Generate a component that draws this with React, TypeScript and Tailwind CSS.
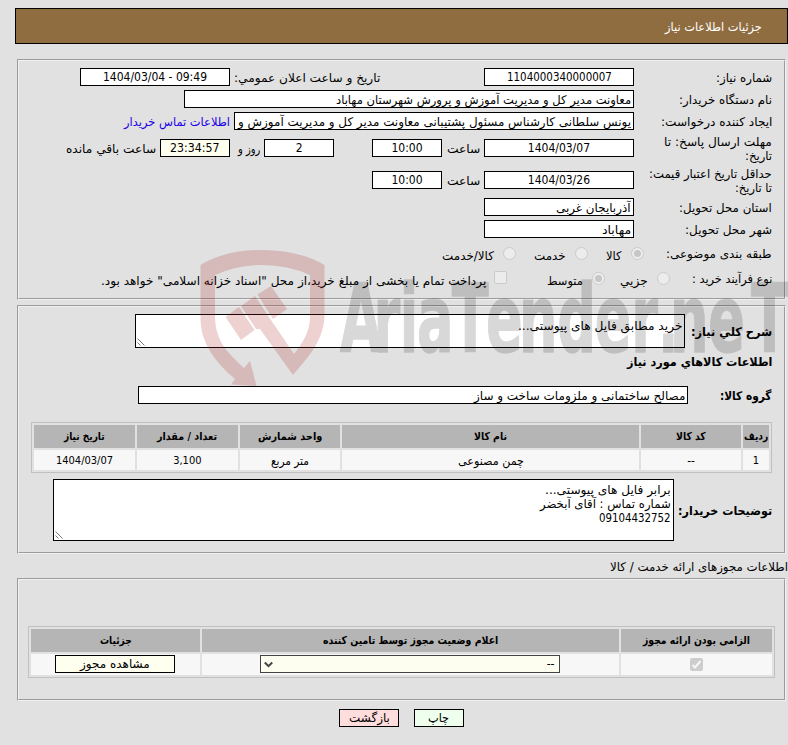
import React, { useLayoutEffect, useRef, useState } from 'react';
import clsx from 'clsx';

interface TxtProps {
  w: number;
  className?: string;
  children: React.ReactNode;
}

// Text squeezed or stretched to a fixed width, anchored on its right edge
const Txt: React.FC<TxtProps> = ({ w, className, children }) => {
  const ref = useRef<HTMLSpanElement>(null);
  const [scale, setScale] = useState(1);

  useLayoutEffect(() => {
    if (ref.current && ref.current.offsetWidth > 0) {
      setScale(w / ref.current.offsetWidth);
    }
  }, [w]);

  return (
    <span className={clsx('flex shrink-0 justify-start', className)} style={{ width: w }}>
      <span
        ref={ref}
        className="block shrink-0 origin-right whitespace-nowrap"
        style={{ transform: `scaleX(${scale})` }}
      >
        {children}
      </span>
    </span>
  );
};

interface FieldProps {
  className: string;
  w: number;
  center?: boolean;
  children: React.ReactNode;
}

const Field: React.FC<FieldProps> = ({ className, w, center, children }) => (
  <div
    className={clsx(
      'flex h-[18px] shrink-0 items-center overflow-hidden border border-black',
      center ? 'justify-center' : 'pt-[2px] pr-[2px]',
      className
    )}
  >
    <Txt w={w}>{children}</Txt>
  </div>
);

const Panel: React.FC<{ className: string; children: React.ReactNode }> = ({
  className,
  children,
}) => (
  <section
    className={clsx('mr-[2px] ml-[17px] border-2 border-[#f0f0f0] [border-style:groove]', className)}
  >
    {children}
  </section>
);

const Radio: React.FC<{ checked?: boolean; className?: string }> = ({ checked, className }) => (
  <span
    className={clsx(
      'flex size-[13px] shrink-0 items-center justify-center rounded-full border border-[#cbcbcb] bg-[#ececec]',
      className
    )}
  >
    {checked && <span className="size-[7px] rounded-full bg-[#c6c6c6]" />}
  </span>
);

const Grip = () => (
  <svg className="absolute bottom-px left-px size-[8px]" viewBox="0 0 8 8" stroke="#555" fill="none">
    <path d="M0.5 0.5L7.5 7.5M0.5 4.5L3.5 7.5" strokeWidth="0.8" />
  </svg>
);

const HeadCell: React.FC<{ w: number; className?: string; children: string }> = ({
  w,
  className,
  children,
}) => (
  <div
    className={clsx(
      'flex h-[23px] shrink-0 items-center justify-center bg-[#b5b5b5] pt-px text-[11px] font-bold',
      className
    )}
  >
    <Txt w={w}>{children}</Txt>
  </div>
);

const Cell: React.FC<{ className?: string; children: React.ReactNode }> = ({
  className,
  children,
}) => (
  <div className={clsx('flex shrink-0 items-center justify-center bg-[#f7f7f7] pt-px', className)}>
    {children}
  </div>
);

const Watermark = () => (
  <svg
    className="pointer-events-none absolute top-[240px] left-[190px] h-[160px] w-[598px]"
    viewBox="190 240 598 160"
  >
    <g fill="#aa1e1e" fillOpacity="0.2">
      <path d="M200.500 265Q225 250 262 250Q299 250 324.500 265V318C322 342 310 355 293 375L260 329L256 329L241 306L255 296L271 320L294 354C303 343 310 330 310 318V275Q288 265 262 265Q236 265 215 275V318C216 342 228 353 244 368L250 361L256.500 386L231 384.500L235 379C214 361 200.500 342 200.500 318Z" />
      <path d="M225.500 317L239 307L254.500 330L241 340Z" />
      <path d="M257.500 294.500L271 286L287 309L273 319Z" />
    </g>
    <g opacity="0.15" transform="translate(340 352) scale(0.57 1)">
      <text
        x="0 58.8 105 135 196 256 314 381 447 511 558 579 646 721"
        y="0"
        direction="ltr"
        className="font-['DejaVu_Sans'] text-[95px] font-bold"
        fill="#000"
        stroke="#000"
        strokeWidth="1.5"
        strokeLinejoin="round"
      >
        AriaTender.neT
      </text>
    </g>
  </svg>
);

const App = () => {
  return (
    <div
      dir="rtl"
      className="relative h-[745px] w-[788px] overflow-hidden bg-[#e1e1e1] pt-2 font-['DejaVu_Sans_Condensed','DejaVu_Sans',sans-serif] text-[12px] leading-[14px] text-black"
    >
      <header className="ml-[15px] flex h-9 items-center border border-black bg-[#8f6d41] pt-[2px] pr-[25px] text-white">
        <Txt w={97}>جزئیات اطلاعات نیاز</Txt>
      </header>

      <Panel className="mt-[15px] h-[241px] pt-[5px] pr-3">
        <div className="flex h-[22px] items-center">
          <div className="w-[138px] pt-[2px]">
            <Txt w={56}>شماره نیاز:</Txt>
          </div>
          <Field className="w-[150px] bg-white" w={105} center>
            1104000340000007
          </Field>
          <Txt w={146} className="mr-[104px] pt-[2px]">
            تاریخ و ساعت اعلان عمومي:
          </Txt>
          <Field className="mr-1 w-[150px] bg-white" w={104} center>
            <bdi dir="ltr">1404/03/04 - 09:49</bdi>
          </Field>
        </div>
        <div className="flex h-[22px] items-center">
          <div className="w-[138px] pt-[2px]">
            <Txt w={93}>نام دستگاه خریدار:</Txt>
          </div>
          <Field className="w-[450px] bg-white" w={295}>
            معاونت مدیر کل و مدیریت آموزش و پرورش شهرستان مهاباد
          </Field>
        </div>
        <div className="flex h-[22px] items-center">
          <div className="w-[138px] pt-[2px]">
            <Txt w={111}>ایجاد کننده درخواست:</Txt>
          </div>
          <Field className="w-[400px] bg-white" w={393}>
            یونس سلطانی کارشناس مسئول پشتیبانی معاونت مدیر کل و مدیریت آموزش و
          </Field>
          <a className="mr-1 pt-[2px] text-[#1c00e8]">
            <Txt w={106}>اطلاعات تماس خریدار</Txt>
          </a>
        </div>
        <div className="flex h-8 items-center">
          <div className="w-[138px] pt-px">
            <Txt w={108}>مهلت ارسال پاسخ: تا</Txt>
            <Txt w={27}>تاریخ:</Txt>
          </div>
          <Field className="w-[150px] bg-white" w={62} center>
            1404/03/07
          </Field>
          <Txt w={33} className="mr-1 pt-[2px]">
            ساعت
          </Txt>
          <Field className="mr-[5px] w-[70px] bg-white" w={31} center>
            10:00
          </Field>
          <Field className="mr-[38px] w-[70px] bg-white" w={7} center>
            2
          </Field>
          <Txt w={22} className="mr-1 pt-[2px]">
            روز و
          </Txt>
          <Field className="mr-2 w-[70px] bg-[#fffff0]" w={49} center>
            23:34:57
          </Field>
          <Txt w={90} className="mr-1 pt-[2px]">
            ساعت باقي مانده
          </Txt>
        </div>
        <div className="flex h-8 items-center">
          <div className="w-[138px] pt-[2px]">
            <Txt w={123}>حداقل تاریخ اعتبار قیمت:</Txt>
            <Txt w={37}>تا تاریخ:</Txt>
          </div>
          <Field className="w-[150px] bg-white" w={62} center>
            1404/03/26
          </Field>
          <Txt w={33} className="mr-1 pt-[2px]">
            ساعت
          </Txt>
          <Field className="mr-[5px] w-[70px] bg-white" w={31} center>
            10:00
          </Field>
        </div>
        <div className="flex h-[22px] items-center">
          <div className="w-[138px] pt-[2px]">
            <Txt w={93}>استان محل تحویل:</Txt>
          </div>
          <Field className="w-[150px] bg-white" w={75}>
            آذربایجان غربی
          </Field>
        </div>
        <div className="flex h-[22px] items-center">
          <div className="w-[138px] pt-[2px]">
            <Txt w={87}>شهر محل تحویل:</Txt>
          </div>
          <Field className="w-[150px] bg-white" w={29}>
            مهاباد
          </Field>
        </div>
        <div className="flex h-[27px] items-center">
          <div className="w-[128px]">
            <Txt w={106}>طبقه بندی موضوعی:</Txt>
          </div>
          <Radio checked />
          <Txt w={16} className="mt-1 mr-[9px]">
            کالا
          </Txt>
          <Radio className="mr-[18px]" />
          <Txt w={32} className="mt-1 mr-[9px]">
            خدمت
          </Txt>
          <Radio className="mr-[18px]" />
          <Txt w={52} className="mt-1 mr-[9px]">
            کالا/خدمت
          </Txt>
        </div>
        <div className="flex h-[23px] items-center">
          <div className="w-[102px]">
            <Txt w={80}>نوع فرآیند خرید :</Txt>
          </div>
          <Radio />
          <Txt w={28} className="mt-1 mr-[9px]">
            جزیي
          </Txt>
          <Radio checked className="mr-[15px]" />
          <Txt w={36} className="mt-1 mr-[9px]">
            متوسط
          </Txt>
          <span className="mr-10 mb-[3px] size-[13px] rounded-[2px] border border-[#cbcbcb] bg-[#ececec]" />
          <Txt w={385} className="mt-1 mr-2">
            پرداخت تمام یا بخشی از مبلغ خرید،از محل "اسناد خزانه اسلامی" خواهد بود.
          </Txt>
        </div>
      </Panel>

      <Panel className="mt-[5px] h-[249px] pt-[7px] pr-3">
        <div className="flex h-[34px] items-center">
          <Txt w={81} className="pt-[2px] font-bold">
            شرح کلي نياز:
          </Txt>
          <div className="relative mr-[6px] h-[34px] w-[550px] border border-black bg-white pt-1 pr-[2px]">
            <Txt w={164}>خرید مطابق فایل های پیوستی...</Txt>
            <Grip />
          </div>
        </div>
        <Txt w={145} className="mt-[7px] font-bold">
          اطلاعات کالاهاي مورد نياز
        </Txt>
        <div className="mt-[17px] flex items-center">
          <div className="w-[84px] pt-[2px]">
            <Txt w={52} className="font-bold">
              گروه کالا:
            </Txt>
          </div>
          <Field className="w-[550px] bg-white" w={211}>
            مصالح ساختمانی و ملزومات ساخت و ساز
          </Field>
        </div>
        <div className="mt-[18px] w-[741px] space-y-[2px] border border-[#c0c0c0] p-[2px]">
          <div className="flex gap-[2px]">
            <HeadCell w={24} className="w-[26px]">ردیف</HeadCell>
            <HeadCell w={30} className="w-[100px]">کد کالا</HeadCell>
            <HeadCell w={33} className="w-[297px]">نام کالا</HeadCell>
            <HeadCell w={64} className="w-[100px]">واحد شمارش</HeadCell>
            <HeadCell w={60} className="w-[101px]">تعداد / مقدار</HeadCell>
            <HeadCell w={41} className="w-[101px]">تاریخ نیاز</HeadCell>
          </div>
          <div className="flex h-5 gap-[2px]">
            <Cell className="w-[26px] text-[11px]">1</Cell>
            <Cell className="w-[100px]">
              <Txt w={8}>--</Txt>
            </Cell>
            <Cell className="w-[297px]">
              <Txt w={66}>چمن مصنوعی</Txt>
            </Cell>
            <Cell className="w-[100px]">
              <Txt w={38}>متر مربع</Txt>
            </Cell>
            <Cell className="w-[101px] text-[11px]">
              <Txt w={28}>3,100</Txt>
            </Cell>
            <Cell className="w-[101px] text-[11px]">
              <Txt w={57}>1404/03/07</Txt>
            </Cell>
          </div>
        </div>
        <div className="mt-[6px] flex items-center">
          <Txt w={94} className="pt-[2px] font-bold">
            توضیحات خریدار:
          </Txt>
          <div className="relative mr-1 h-[62px] w-[621px] border border-black bg-white pt-[3px] pr-[2px]">
            <Txt w={126}>برابر فایل های پیوستی...</Txt>
            <Txt w={131}>شماره تماس : آقای آبخضر</Txt>
            <Txt w={72}>09104432752</Txt>
            <Grip />
          </div>
        </div>
      </Panel>

      <Txt w={178} className="mt-[6px]">
        اطلاعات مجوزهای ارائه خدمت / کالا
      </Txt>

      <Panel className="mt-1 h-[123px] pt-[46px] pr-[9px]">
        <div className="w-[747px] space-y-[2px] border border-[#c0c0c0] p-[2px]">
          <div className="flex gap-[2px]">
            <HeadCell w={107} className="w-[151px]">الزامی بودن ارائه مجوز</HeadCell>
            <HeadCell w={175} className="w-[417px]">اعلام وضعیت مجوز توسط تامین کننده</HeadCell>
            <HeadCell w={32} className="w-[169px]">جزئیات</HeadCell>
          </div>
          <div className="flex h-[21px] gap-[2px]">
            <Cell className="w-[151px]">
              <span className="mb-px flex size-[13px] items-center justify-center rounded-[2px] bg-[#cdcdcd]">
                <svg className="size-[11px]" viewBox="0 0 11 11" fill="none" stroke="#f7f7f7">
                  <path d="M1.5 6L4 8.5L9.5 2" strokeWidth="2" />
                </svg>
              </span>
            </Cell>
            <Cell className="w-[417px] pr-[2px]">
              <div className="mb-[2px] flex h-[18px] w-[300px] items-center justify-between border border-[#444] bg-[#fdfdf0] pr-1 pl-[3px]">
                <Txt w={8}>--</Txt>
                <svg className="size-[9px]" viewBox="0 0 9 9" fill="none" stroke="#444">
                  <path d="M0.8 2.5L4.5 6.2L8.2 2.5" strokeWidth="2" />
                </svg>
              </div>
            </Cell>
            <Cell className="w-[169px] pr-[2px]">
              <Field className="mb-[2px] w-[120px] bg-[#fffff0]" w={70} center>
                مشاهده مجوز
              </Field>
            </Cell>
          </div>
        </div>
      </Panel>

      <div className="mt-2 mr-[324px] flex gap-[15px]">
        <Field className="w-[50px] bg-[#eeffee]" w={21} center>
          چاپ
        </Field>
        <Field className="w-[60px] bg-[#ffdddd]" w={41} center>
          بازگشت
        </Field>
      </div>

      <Watermark />
    </div>
  );
};

export default App;
